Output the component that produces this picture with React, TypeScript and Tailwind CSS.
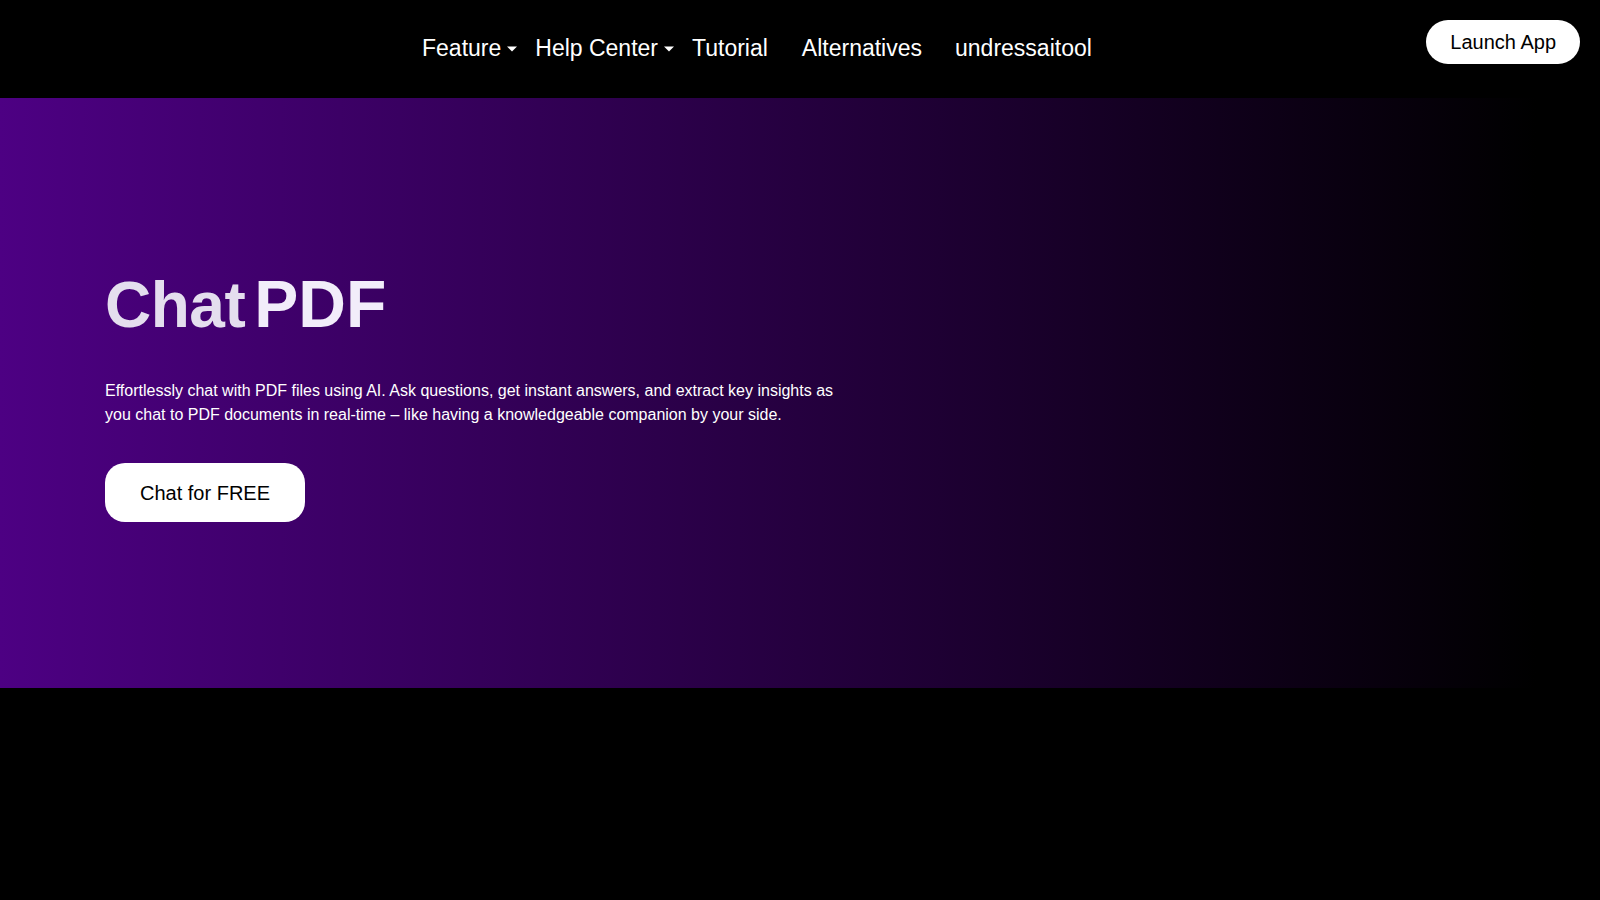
import React from "react";

const font = { fontFamily: '"Liberation Sans", Arial, sans-serif' };

function Caret() {
  return (
    <svg width="10" height="6" viewBox="0 0 10 6" className="ml-[6px] mt-[2px]">
      <path d="M0 0.5 L10 0.5 L5 5.5 Z" fill="#ffffff" />
    </svg>
  );
}

function NavItem({ label, dropdown = false }: { label: string; dropdown?: boolean }) {
  return (
    <a href="#" className="flex items-center text-[23px] leading-none text-white">
      <span>{label}</span>
      {dropdown && <Caret />}
    </a>
  );
}

export default function App() {
  return (
    <div className="min-h-[900px] w-full bg-black" style={font}>
      <header className="relative flex h-[98px] items-start">
        <nav className="flex h-[98px] items-center pl-[422px] pb-[2px]">
          <NavItem label="Feature" dropdown />
          <div className="ml-[18px]">
            <NavItem label="Help Center" dropdown />
          </div>
          <div className="ml-[18px]">
            <NavItem label="Tutorial" />
          </div>
          <div className="ml-[34px]">
            <NavItem label="Alternatives" />
          </div>
          <div className="ml-[33px]">
            <NavItem label="undressaitool" />
          </div>
        </nav>
        <div className="ml-auto pt-[20px] pr-[20px]">
          <button className="h-[44px] rounded-full bg-white px-[24px] text-[20px] leading-none text-black">
            Launch App
          </button>
        </div>
      </header>

      <section className="flex h-[590px] items-center bg-[linear-gradient(to_right,#4d0083_0%,#000000_96%)] pl-[105px]">
        <div className="pt-[2px]">
          <h1 className="flex items-baseline font-bold leading-[77px]">
            <span className="text-[64px] tracking-[-0.5px] text-[#e4deee]">Chat</span>
            <span className="ml-[9px] text-[66px] text-[#f2edfa]">PDF</span>
          </h1>
          <p className="mt-[35px] max-w-[745px] text-[16px] leading-[24px] text-white">
            Effortlessly chat with PDF files using AI. Ask questions, get instant answers, and extract key
            insights as you chat to PDF documents in real-time – like having a knowledgeable companion by
            your side.
          </p>
          <button className="mt-[36px] h-[59px] rounded-[20px] bg-white px-[35px] text-[20px] leading-none text-black">
            Chat for FREE
          </button>
        </div>
      </section>
    </div>
  );
}
